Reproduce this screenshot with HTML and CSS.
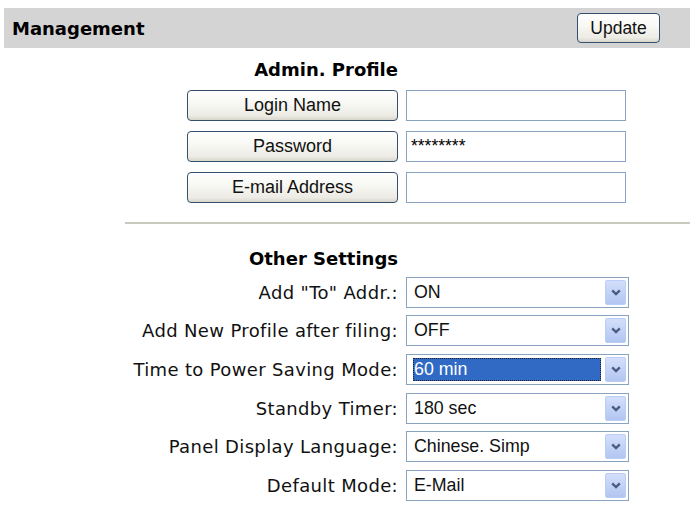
FILE: index.html
```html
<!DOCTYPE html>
<html>
<head>
<meta charset="utf-8">
<title>Management</title>
<link rel="stylesheet" href="styles.css">
</head>
<body>
<div class="page">
  <div class="titlebar">
    <span class="title">Management</span>
    <button class="btn btn-update" type="button">Update</button>
  </div>

  <div class="grid admin">
    <div class="heading">Admin. Profile</div>
    <button class="btn field-btn" type="button">Login Name</button>
    <input class="text" type="text" value="">
    <button class="btn field-btn" type="button">Password</button>
    <input class="text pw" type="text" value="********">
    <button class="btn field-btn" type="button">E-mail Address</button>
    <input class="text" type="text" value="">
  </div>

  <hr class="sep">

  <div class="grid settings">
    <div class="heading">Other Settings</div>

    <label class="label">Add "To" Addr.:</label>
    <div class="select"><span class="value">ON</span><span class="arrow"><svg width="10" height="7" viewBox="0 0 10 7"><path d="M1.2 1.4 L5 5 L8.8 1.4" fill="none" stroke="#4a5c84" stroke-width="2.4"/></svg></span></div>

    <label class="label">Add New Profile after filing:</label>
    <div class="select"><span class="value">OFF</span><span class="arrow"><svg width="10" height="7" viewBox="0 0 10 7"><path d="M1.2 1.4 L5 5 L8.8 1.4" fill="none" stroke="#4a5c84" stroke-width="2.4"/></svg></span></div>

    <label class="label">Time to Power Saving Mode:</label>
    <div class="select"><span class="value selected">60 min</span><span class="arrow"><svg width="10" height="7" viewBox="0 0 10 7"><path d="M1.2 1.4 L5 5 L8.8 1.4" fill="none" stroke="#4a5c84" stroke-width="2.4"/></svg></span></div>

    <label class="label">Standby Timer:</label>
    <div class="select"><span class="value">180 sec</span><span class="arrow"><svg width="10" height="7" viewBox="0 0 10 7"><path d="M1.2 1.4 L5 5 L8.8 1.4" fill="none" stroke="#4a5c84" stroke-width="2.4"/></svg></span></div>

    <label class="label">Panel Display Language:</label>
    <div class="select"><span class="value">Chinese. Simp</span><span class="arrow"><svg width="10" height="7" viewBox="0 0 10 7"><path d="M1.2 1.4 L5 5 L8.8 1.4" fill="none" stroke="#4a5c84" stroke-width="2.4"/></svg></span></div>

    <label class="label">Default Mode:</label>
    <div class="select"><span class="value">E-Mail</span><span class="arrow"><svg width="10" height="7" viewBox="0 0 10 7"><path d="M1.2 1.4 L5 5 L8.8 1.4" fill="none" stroke="#4a5c84" stroke-width="2.4"/></svg></span></div>
  </div>
</div>
</body>
</html>
```

FILE: styles.css
```css
* { box-sizing: border-box; }

body {
  margin: 0;
  background: #ffffff;
  color: #000000;
  font-family: "DejaVu Sans", Verdana, sans-serif;
}

.page {
  padding: 8px 5px 0 4px;
}

.titlebar {
  display: flex;
  align-items: center;
  justify-content: space-between;
  height: 40px;
  background: #d4d4d4;
  padding: 0 30px 0 8px;
}

.title {
  font-weight: bold;
  font-size: 18px;
}

.btn {
  font-family: "Liberation Sans", Arial, sans-serif;
  font-size: 17.5px;
  color: #111;
  border: 1px solid #34506e;
  border-radius: 4px;
  background: linear-gradient(#ffffff, #f7f7f3 45%, #ecebe4 85%, #d8d6cc);
  padding: 0;
}

.btn-update {
  width: 83px;
  height: 30px;
}

.grid {
  display: grid;
  grid-template-columns: 394px 224px;
  column-gap: 8px;
}

.admin {
  margin-top: 12px;
  row-gap: 10px;
}

.heading {
  grid-column: 1;
  font-weight: bold;
  font-size: 18px;
  line-height: 20px;
  text-align: right;
}

.field-btn {
  grid-column: 1;
  justify-self: end;
  width: 211px;
  height: 31px;
  font-size: 18px;
}

.text {
  grid-column: 2;
  width: 220px;
  height: 31px;
  border: 1px solid #8aa4c0;
  background: #fff;
  font-family: "Liberation Sans", Arial, sans-serif;
  font-size: 17.5px;
  color: #000;
  padding: 0 4px;
  margin: 0;
}

.sep {
  border: 0;
  height: 2px;
  background: #c9c9bd;
  margin: 19px 0 0 121px;
}

.settings {
  margin-top: 25px;
  row-gap: 7.7px;
}

.label {
  grid-column: 1;
  justify-self: end;
  align-self: center;
  font-size: 18px;
  letter-spacing: 0.35px;
  color: #111;
}

.select {
  grid-column: 2;
  width: 223px;
  height: 31px;
  border: 1px solid #8aa4c0;
  background: #fff;
  padding: 2px;
  display: flex;
}

.value {
  flex: 1;
  margin: 1px 4px;
  padding-left: 1px;
  display: flex;
  align-items: center;
  font-family: "Liberation Sans", Arial, sans-serif;
  font-size: 17.8px;
  color: #111;
}

.value.selected {
  background: #316ac5;
  color: #fff;
  outline: 1px dotted #222;
  outline-offset: -1px;
}

.arrow {
  width: 21px;
  border: 1px solid #bccdf5;
  border-radius: 2px;
  background: linear-gradient(#d3dffb, #b2c6f1);
  display: flex;
  align-items: center;
  justify-content: center;
}
```
